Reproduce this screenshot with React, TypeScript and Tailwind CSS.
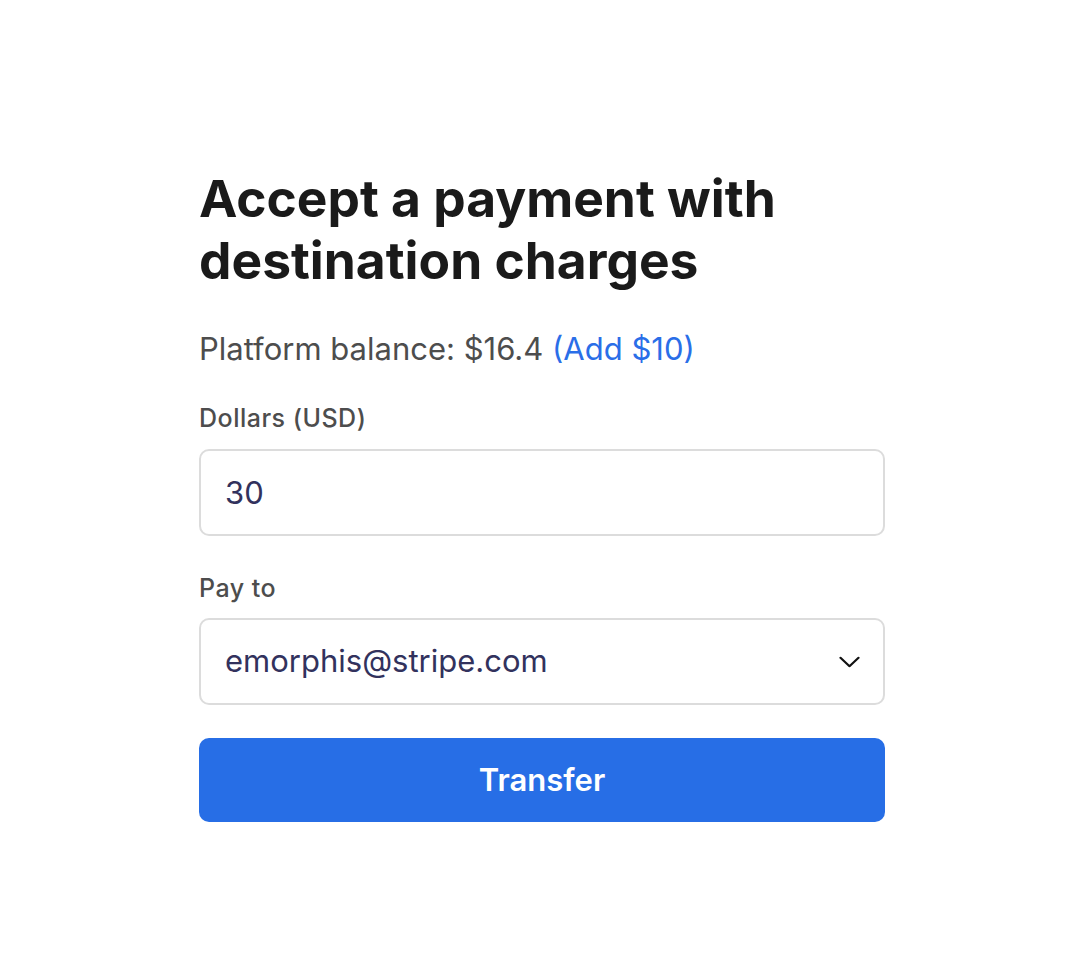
export default function App() {
  return (
    <div className="min-h-[976px] bg-white font-['Inter',sans-serif]">
      <div className="mx-auto w-[686px] pt-[167px]">
        <h1 className="text-[51.5px] font-bold leading-[62px] text-[#1a1a1a]">
          Accept a payment with destination charges
        </h1>
        <p className="mt-[38px] text-[31px] leading-[40px] text-[#4d4d4d]">
          Platform balance: $16.4{" "}
          <a href="#" className="text-[#2a6ee8]">
            (Add $10)
          </a>
        </p>
        <form className="mt-[33px]">
          <label className="block text-[25px] font-medium leading-[32px] tracking-[0.02em] text-[#4d4d4d]">
            Dollars (USD)
          </label>
          <input
            type="text"
            defaultValue="30"
            className="mt-[15px] block h-[87px] w-full rounded-[10px] border-2 border-[#dcdcdc] px-[24px] text-[31px] text-[#32325d] outline-none"
          />
          <label className="mt-[36px] block text-[25px] font-medium leading-[32px] tracking-[0.02em] text-[#4d4d4d]">
            Pay to
          </label>
          <div className="relative mt-[14px]">
            <select className="block h-[87px] w-full appearance-none rounded-[10px] border-2 border-[#dcdcdc] bg-white px-[24px] text-[31px] text-[#32325d] outline-none">
              <option>emorphis@stripe.com</option>
            </select>
            <svg
              viewBox="0 0 21 11"
              className="pointer-events-none absolute right-[25px] top-1/2 h-[11px] w-[21px] -translate-y-1/2"
              fill="none"
            >
              <path d="M1.5 1.2 10.5 9.8 19.5 1.2" stroke="#111" strokeWidth="2.2" strokeLinecap="round" strokeLinejoin="round" />
            </svg>
          </div>
          <button
            type="button"
            className="mt-[33px] block h-[84px] w-full rounded-[10px] bg-[#276ee6] text-[31px] font-semibold text-white"
          >
            Transfer
          </button>
        </form>
      </div>
    </div>
  );
}
